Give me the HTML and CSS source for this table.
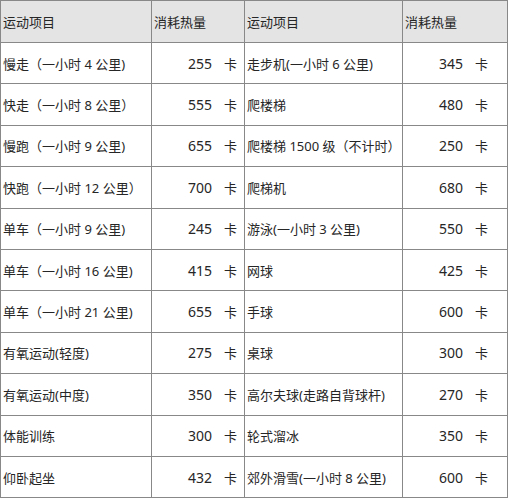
FILE: index.html
```html
<!DOCTYPE html>
<html lang="zh">
<head>
<meta charset="utf-8">
<title>运动消耗热量表</title>
<link rel="stylesheet" href="styles.css">
</head>
<body>
<table class="cal">
  <colgroup>
    <col class="c-name1"><col class="c-val1"><col class="c-name2"><col class="c-val2">
  </colgroup>
  <thead>
    <tr class="head">
      <th>运动项目</th><th>消耗热量</th><th>运动项目</th><th>消耗热量</th>
    </tr>
  </thead>
  <tbody>
    <tr><td>慢走（一小时 4 公里)</td><td class="v"><span class="n">255</span><span class="u">卡</span></td><td>走步机(一小时 6 公里)</td><td class="v"><span class="n">345</span><span class="u">卡</span></td></tr>
    <tr><td>快走（一小时 8 公里）</td><td class="v"><span class="n">555</span><span class="u">卡</span></td><td>爬楼梯</td><td class="v"><span class="n">480</span><span class="u">卡</span></td></tr>
    <tr><td>慢跑（一小时 9 公里)</td><td class="v"><span class="n">655</span><span class="u">卡</span></td><td>爬楼梯 1500 级（不计时）</td><td class="v"><span class="n">250</span><span class="u">卡</span></td></tr>
    <tr><td>快跑（一小时 12 公里）</td><td class="v"><span class="n">700</span><span class="u">卡</span></td><td>爬梯机</td><td class="v"><span class="n">680</span><span class="u">卡</span></td></tr>
    <tr><td>单车（一小时 9 公里)</td><td class="v"><span class="n">245</span><span class="u">卡</span></td><td>游泳(一小时 3 公里)</td><td class="v"><span class="n">550</span><span class="u">卡</span></td></tr>
    <tr><td>单车（一小时 16 公里)</td><td class="v"><span class="n">415</span><span class="u">卡</span></td><td>网球</td><td class="v"><span class="n">425</span><span class="u">卡</span></td></tr>
    <tr><td>单车（一小时 21 公里)</td><td class="v"><span class="n">655</span><span class="u">卡</span></td><td>手球</td><td class="v"><span class="n">600</span><span class="u">卡</span></td></tr>
    <tr><td>有氧运动(轻度)</td><td class="v"><span class="n">275</span><span class="u">卡</span></td><td>桌球</td><td class="v"><span class="n">300</span><span class="u">卡</span></td></tr>
    <tr><td>有氧运动(中度)</td><td class="v"><span class="n">350</span><span class="u">卡</span></td><td>高尔夫球(走路自背球杆)</td><td class="v"><span class="n">270</span><span class="u">卡</span></td></tr>
    <tr><td>体能训练</td><td class="v"><span class="n">300</span><span class="u">卡</span></td><td>轮式溜冰</td><td class="v"><span class="n">350</span><span class="u">卡</span></td></tr>
    <tr><td>仰卧起坐</td><td class="v"><span class="n">432</span><span class="u">卡</span></td><td>郊外滑雪(一小时 8 公里)</td><td class="v"><span class="n">600</span><span class="u">卡</span></td></tr>
  </tbody>
</table>
</body>
</html>
```
FILE: styles.css
```css
html, body {
  margin: 0;
  padding: 0;
  background: #ffffff;
}
body {
  font-family: "Noto Sans", "Noto Sans CJK SC", sans-serif;
  font-size: 13px;
  color: #262626;
}
.cal {
  border-collapse: collapse;
  table-layout: fixed;
  width: 507px;
  margin: 0;
}
.c-name1 { width: 151px; }
.c-val1 { width: 93px; }
.c-name2 { width: 158px; }
.c-val2 { width: 105px; }
.cal th, .cal td {
  border: 1px solid #888888;
  padding: 0 0 0 2px;
  text-align: left;
  font-weight: normal;
  white-space: nowrap;
  overflow: hidden;
  vertical-align: middle;
}
.head {
  height: 42px;
  background: #e4e4e4;
}
.cal tbody tr {
  height: 41.4px;
}
.v {
  padding: 0;
}
.n {
  display: inline-block;
  width: 58px;
  text-align: right;
  font-size: 14px;
}
.u {
  display: inline-block;
  margin-left: 12px;
}
```
